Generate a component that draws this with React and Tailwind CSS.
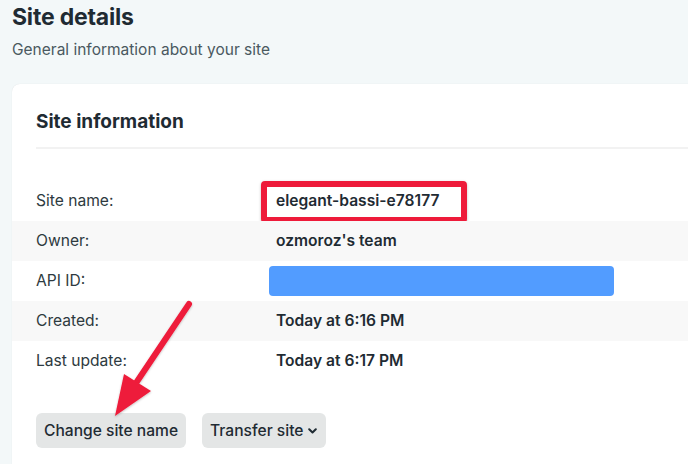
import React from "react";

const rows = [
  { label: "Site name:", value: "elegant-bassi-e78177", gray: false, highlight: true },
  { label: "Owner:", value: "ozmoroz's team", gray: true },
  { label: "API ID:", value: null, gray: false, redacted: true },
  { label: "Created:", value: "Today at 6:16 PM", gray: true },
  { label: "Last update:", value: "Today at 6:17 PM", gray: false },
];

export default function App() {
  return (
    <div
      className="relative w-[688px] h-[464px] overflow-hidden bg-[#f3f8f9] text-[#1f2b33]"
      style={{ fontFamily: "Inter, 'Noto Sans', Arial, sans-serif" }}
    >
      <div className="pl-3 pt-[2px]">
        <h1 className="text-[23px] leading-[30px] font-bold tracking-[-0.2px]">Site details</h1>
        <p className="mt-[8px] text-[15.5px] leading-[20px] text-[#4a5960]">
          General information about your site
        </p>
      </div>

      <div className="ml-3 mt-[24px] w-[720px] h-[400px] bg-white rounded-tl-lg shadow-[0_0_1px_rgba(0,0,0,0.12)]">
        <div className="px-6 pt-[25px]">
          <h2 className="text-[19px] leading-[26px] font-bold">Site information</h2>
          <div className="mt-[12px] h-[2px] bg-[#f2f2f2]" />
        </div>

        <div className="mt-[32px]">
          {rows.map((r) => (
            <div
              key={r.label}
              className={`relative flex items-center h-[40px] ${r.gray ? "bg-[#f8f8f8]" : "bg-white"}`}
            >
              <div className="w-[264px] pl-6 text-[15.6px] text-[#2e3a40]">{r.label}</div>
              <div className="text-[15.6px] font-semibold text-[#1f2b33]">
                {r.redacted ? (
                  <div className="ml-[-7px] w-[345px] h-[30px] rounded-[4px] bg-[#529cff]" />
                ) : (
                  r.value
                )}
              </div>
              {r.highlight && (
                <div className="absolute left-[249px] top-0 w-[206px] h-[42px] rounded-[4px] border-[6px] border-[#ee1b3a] shadow-[0_1px_3px_rgba(0,0,0,0.25)]" />
              )}
            </div>
          ))}
        </div>

        <div className="flex gap-4 pl-6 mt-[32px]">
          <button className="h-[35px] px-2 rounded-[6px] bg-[#e4e6e6] text-[15.6px] font-medium text-[#1f2b33]">
            Change site name
          </button>
          <button className="h-[35px] pl-2 pr-[9px] rounded-[6px] bg-[#e4e6e6] text-[15.6px] font-medium text-[#1f2b33] flex items-center gap-[5px]">
            Transfer site
            <svg width="9" height="6" viewBox="0 0 9 6" fill="none">
              <path d="M1.2 1.2 L4.5 4.5 L7.8 1.2" stroke="#1f2b33" strokeWidth="2" strokeLinecap="round" strokeLinejoin="round" />
            </svg>
          </button>
        </div>
      </div>

      <svg className="absolute left-0 top-0 pointer-events-none" width="688" height="464">
        <defs>
          <filter id="sh" x="-20%" y="-20%" width="140%" height="140%">
            <feDropShadow dx="0" dy="1" stdDeviation="1" floodColor="#000" floodOpacity="0.25" />
          </filter>
        </defs>
        <g filter="url(#sh)">
          <line x1="189" y1="304" x2="136" y2="383" stroke="#ee1b3a" strokeWidth="6" strokeLinecap="round" />
          <polygon points="115,416 124,374 151,391" fill="#ee1b3a" />
        </g>
      </svg>
    </div>
  );
}
